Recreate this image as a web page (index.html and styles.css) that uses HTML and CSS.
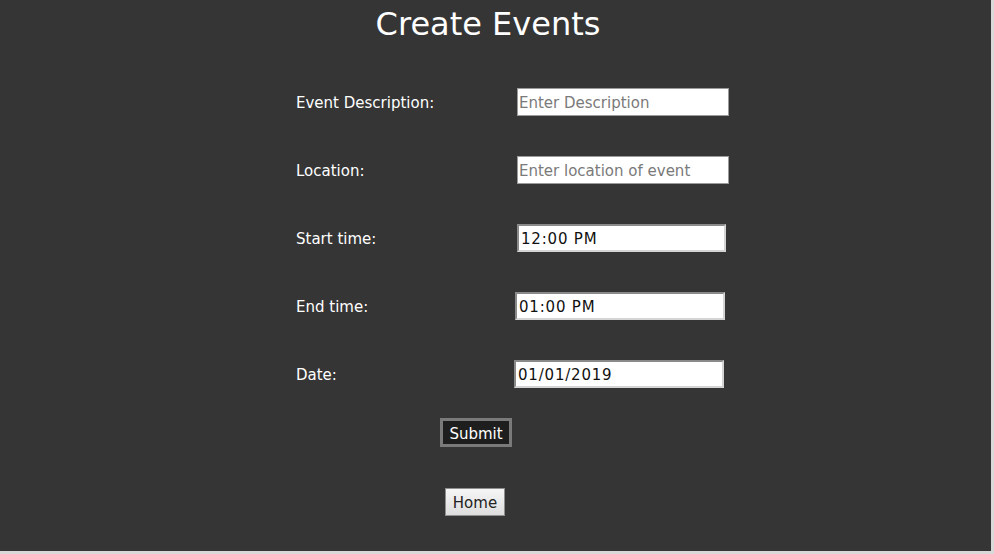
FILE: index.html
```html
<!DOCTYPE html>
<html lang="en">
<head>
<meta charset="utf-8">
<title>Create Events</title>
<link rel="stylesheet" href="styles.css">
</head>
<body>
<div class="page">
  <h1 class="title">Create Events</h1>
  <form class="event-form">
    <div class="row">
      <label class="label">Event Description:</label>
      <input class="field field-a" type="text" placeholder="Enter Description">
    </div>
    <div class="row">
      <label class="label">Location:</label>
      <input class="field field-a" type="text" placeholder="Enter location of event">
    </div>
    <div class="row">
      <label class="label">Start time:</label>
      <input class="field field-b mono" type="text" value="12:00 PM">
    </div>
    <div class="row">
      <label class="label">End time:</label>
      <input class="field field-c mono" type="text" value="01:00 PM">
    </div>
    <div class="row">
      <label class="label">Date:</label>
      <input class="field field-d mono" type="text" value="01/01/2019">
    </div>
    <div class="actions">
      <button class="submit" type="button">Submit</button>
      <button class="home" type="button">Home</button>
    </div>
  </form>
</div>
</body>
</html>
```

FILE: styles.css
```css
html, body {
  margin: 0;
  padding: 0;
  background: #d9d9d9;
}

.page {
  width: 991px;
  height: 551px;
  background: #353535;
  font-family: "DejaVu Sans", Verdana, sans-serif;
  color: #ffffff;
  overflow: hidden;
}

.title {
  margin: 0;
  width: 976px;
  padding-top: 5px;
  text-align: center;
  font-size: 32px;
  font-weight: normal;
  line-height: 38px;
}

.event-form {
  margin: 45px 0 0 296px;
  display: flex;
  flex-direction: column;
  align-items: flex-start;
  gap: 40px;
}

.row {
  display: flex;
  align-items: center;
  height: 28px;
}

.label {
  font-size: 15px;
  line-height: 18px;
  padding-top: 2px;
  width: 221px;
  flex: none;
}

.field {
  box-sizing: border-box;
  flex: none;
  height: 28px;
  font-family: "DejaVu Sans", Verdana, sans-serif;
  font-size: 15px;
  color: #111;
  background: #fff;
  padding: 2px 1px 0;
  outline: none;
}

.field::placeholder {
  color: #7a7a7a;
}

.field-a {
  width: 212px;
  border: 1px solid #9a9a9a;
}

.field-b, .field-c, .field-d {
  border-style: solid;
  border-width: 2px;
  border-color: #8a8a8a #d4d4d4 #d4d4d4 #8a8a8a;
  padding: 2px 2px 0;
}

.field-b {
  width: 209px;
}

.field-c {
  width: 210px;
  margin-left: -2px;
}

.field-d {
  width: 210px;
  margin-left: -3px;
}

.mono {
  letter-spacing: 0.8px;
}

.actions {
  width: 360px;
  display: flex;
  flex-direction: column;
  align-items: center;
  margin-top: -10px;
  gap: 41px;
}

.submit {
  box-sizing: border-box;
  width: 72px;
  height: 29px;
  background: #1e1e1e;
  border: 3px solid #7a7a7a;
  color: #fff;
  font-family: "DejaVu Sans", Verdana, sans-serif;
  font-size: 15px;
  padding: 2px 0 0;
}

.home {
  box-sizing: border-box;
  width: 60px;
  height: 28px;
  margin-left: -2px;
  background: linear-gradient(#f6f6f6, #dddddd);
  border: 1px solid #8f8f8f;
  color: #222;
  font-family: "DejaVu Sans", Verdana, sans-serif;
  font-size: 15px;
  padding: 2px 0 0;
}
```
